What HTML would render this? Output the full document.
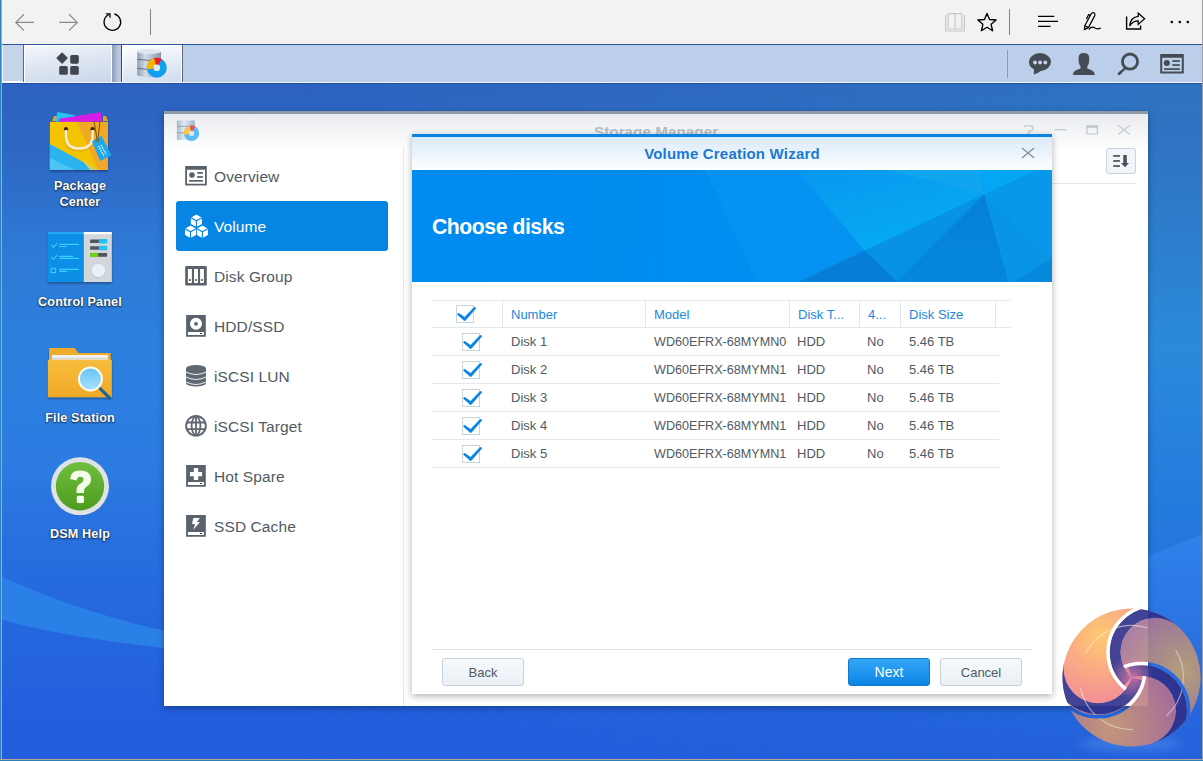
<!DOCTYPE html>
<html><head><meta charset="utf-8">
<style>
*{margin:0;padding:0;box-sizing:border-box}
html,body{width:1203px;height:761px;overflow:hidden}
body{position:relative;font-family:"Liberation Sans",sans-serif;background:#2d63c1}
.abs{position:absolute}
#desk{left:0;top:84px;width:1203px;height:677px;background:linear-gradient(180deg,#2e62c0 0%,#2d66c6 40%,#2a60d6 100%)}
#toolbar{left:0;top:0;width:1203px;height:44px;background:#f2f2f2}
#blueline{left:0;top:44px;width:1203px;height:1px;background:#2b569f}
#taskbar{left:0;top:45px;width:1203px;height:38px;background:#bccfea}
#tbline{left:0;top:83px;width:1203px;height:1px;background:#1f4c9c}
#lb{left:0;top:0;width:2px;height:761px;background:linear-gradient(90deg,#2e80b8 50%,#b8a890 50%)}
#rb{left:1202px;top:0;width:1px;height:761px;background:#a0a0a0}
#bb{left:0;top:759px;width:1203px;height:2px;background:linear-gradient(180deg,#b4a98f 50%,#2f7fb5 50%)}
.dtxt{position:absolute;width:120px;text-align:center;color:#fff;font-weight:bold;font-size:12.6px;letter-spacing:.15px;line-height:16px;text-shadow:0 1px 2px rgba(0,0,0,.7),0 0 1px rgba(0,0,0,.6)}
/* storage manager window */
#sm{left:164px;top:111px;width:984px;height:595px;background:#fff;border-top:3px solid #8f99a5;box-shadow:0 2px 6px rgba(0,0,0,.35)}
#smhead{left:0;top:0;width:984px;height:36px;background:linear-gradient(180deg,#e8ebef,#fff)}
.nav{position:absolute;left:12px;width:212px;height:50px;border-radius:3px;color:#505a64;font-size:15.5px;letter-spacing:.1px}
.nav span{position:absolute;left:38px;top:15.5px;line-height:20px}
.nav svg{position:absolute;left:9px;top:14px}
.nav.sel{background:#0785e2;color:#fff}
/* dialog */
#dlg{left:412px;top:134px;width:640px;height:560px;background:#fff;border-top:3px solid #0a85e3;box-shadow:0 2px 7px rgba(0,0,0,.32)}
#dhead{left:0;top:0;width:640px;height:33px;background:linear-gradient(180deg,#daeaf8,#fdfeff)}
#dtitle{left:0;top:8px;width:640px;text-align:center;color:#1a79d3;font-weight:bold;font-size:15px;letter-spacing:.2px;line-height:18px}
#banner{left:0;top:33px;width:640px;height:112px;background:#058ff0;overflow:hidden}
#choose{left:20px;top:44.5px;color:#fff;font-weight:bold;font-size:21.2px;letter-spacing:-.45px;line-height:24px}
.th,.td{position:absolute;font-size:13px;line-height:16px}
.th{color:#1b88dc;margin-top:1px}
.td{color:#505a64}
.hl{position:absolute;height:1px;background:#e3e8ee}
.vl{position:absolute;width:1px;background:#e3e8ee}
.cb{position:absolute;width:18px;height:18px;border:1px solid #c9d3dd;background:#fff}
.btn{position:absolute;top:521px;width:82px;height:28px;border-radius:3px;font-size:13px;text-align:center;line-height:27px}
.btn.g{border:1px solid #c7d1db;background:linear-gradient(180deg,#f7fafc,#e9eff5);color:#505a64}
.btn.b{border:1px solid #1279d3;background:linear-gradient(180deg,#34a6f7,#0b85e4);color:#fff}
</style></head>
<body>
<div id="desk" class="abs"><svg class="abs" style="left:0;top:0" width="1203" height="677" viewBox="0 84 1203 677">
<defs>
<linearGradient id="dg" x1="0" y1="84" x2="0" y2="761" gradientUnits="userSpaceOnUse"><stop offset="0" stop-color="#2d62c0"/><stop offset=".1" stop-color="#2d68c4"/><stop offset=".25" stop-color="#2e7ad6"/><stop offset=".39" stop-color="#2c80dd"/><stop offset=".55" stop-color="#2c7ce2"/><stop offset=".69" stop-color="#276ede"/><stop offset=".95" stop-color="#225ddd"/></linearGradient>
<linearGradient id="rg" x1="0" y1="84" x2="0" y2="761" gradientUnits="userSpaceOnUse"><stop offset="0" stop-color="#2f72c0"/><stop offset=".1" stop-color="#2e74c2"/><stop offset=".39" stop-color="#2b8adb"/><stop offset=".59" stop-color="#257ddd"/><stop offset="1" stop-color="#2360da"/></linearGradient>
<linearGradient id="rm" x1="300" y1="0" x2="1150" y2="0" gradientUnits="userSpaceOnUse"><stop offset="0" stop-color="#fff" stop-opacity="0"/><stop offset="1" stop-color="#fff" stop-opacity="1"/></linearGradient>
<mask id="rmask"><rect x="0" y="84" width="1203" height="677" fill="url(#rm)"/></mask>
<linearGradient id="rb2" x1="0" y1="535" x2="0" y2="761" gradientUnits="userSpaceOnUse"><stop offset="0" stop-color="#2e82ea"/><stop offset=".55" stop-color="#2a6ee0"/><stop offset="1" stop-color="#2460db"/></linearGradient>
</defs>
<rect x="0" y="84" width="1203" height="677" fill="url(#dg)"/>
<rect x="0" y="84" width="1203" height="677" fill="url(#rg)" mask="url(#rmask)"/>
<path d="M0 576 C 40 594, 100 618, 180 634 L180 650 C 100 641, 40 631, 0 619 Z" fill="#2b80e8"/>
<path d="M1148 556 L1203 534 L1203 761 L1148 761 Z" fill="url(#rb2)"/>
</svg></div>
<div id="toolbar" class="abs"><svg class="abs" style="left:0;top:0" width="1203" height="44" viewBox="0 0 1203 44">
<g fill="none" stroke="#8c8c8c" stroke-width="1.25">
<path d="M15.8 22.4 H34 M24 14.2 L15.8 22.4 L24 30.6"/>
<path d="M59.2 22.4 H77.4 M69 14.2 L77.2 22.4 L69 30.6"/>
</g>
<g fill="none" stroke="#000" stroke-width="1.35">
<path d="M114.4 14.0 A8.3 8.3 0 1 1 108.9 14.5"/>
</g>
<path d="M105.4 13.3 L110.6 13.3 L110.6 18.3 L109.3 17.2 L109.3 14.6 L106.6 14.6 Z" fill="#000"/>
<rect x="150" y="9" width="1" height="26" fill="#848484"/>
<g fill="none" stroke="#c9c9c9" stroke-width="1.2">
<path d="M945.6 15.2 V31 H964.4 V15.2"/>
<path d="M948.2 13.6 H955 V29 H948.2 Z M955 13.6 H961.8 V29 H955 Z"/>
</g>
<path d="M987.00 13.40 L989.53 19.52 L996.13 20.03 L991.09 24.33 L992.64 30.77 L987.00 27.30 L981.36 30.77 L982.91 24.33 L977.87 20.03 L984.47 19.52 Z" fill="none" stroke="#000" stroke-width="1.35" stroke-linejoin="round"/>
<rect x="1009" y="9" width="1" height="26" fill="#848484"/>
<g stroke="#000" stroke-width="1.3">
<path d="M1038 16.3 H1054.3 M1038 21.3 H1058 M1038 26.3 H1050.5"/>
</g>
<g fill="none" stroke="#000" stroke-width="1.2" stroke-linejoin="round">
<path d="M1084.4 29.6 L1084.8 25.8 L1091.2 13.8 Q1092.6 11.9 1094.2 12.9 Q1095.4 14 1094.8 15.6 L1088.4 27.6 Z"/><path d="M1090.4 15.4 L1088.6 14.6 L1086.4 19.2"/><path d="M1084.8 25.8 L1088.4 27.6"/><path d="M1088.9 29.4 Q1091.6 26.2 1094.4 27.6 Q1097 29.9 1100.8 28"/>
</g>
<g fill="none" stroke="#000" stroke-width="1.4">
<path d="M1126.6 16.6 V29 H1140.6 V25.6"/>

</g>
<path d="M1129.6 26 Q1130.6 17.2 1138.2 16.4 L1138.2 13.2 L1144.6 18.8 L1138.2 24.4 L1138.2 20.8 Q1132.6 20.8 1129.6 26 Z" fill="none" stroke="#000" stroke-width="1.25" stroke-linejoin="miter"/>
<circle cx="1171.8" cy="22" r="1.3" fill="#000"/><circle cx="1179.8" cy="22" r="1.3" fill="#000"/><circle cx="1187.8" cy="22" r="1.3" fill="#000"/>
</svg></div>
<div id="blueline" class="abs"></div>
<div id="taskbar" class="abs"><div class="abs" style="left:2px;top:0;width:21px;height:37px;background:#c6d4ea;border-left:1px solid #e9eef7;border-bottom:1px solid #fff"></div>
<div class="abs" style="left:23px;top:0;width:1px;height:37px;background:#5f6678"></div>
<div class="abs" style="left:24px;top:0;width:88px;height:37px;border:1px solid #fff;border-bottom:none;background:linear-gradient(170deg,#f5f8fc 0%,#dfe6f2 45%,#c9d6ec 100%)"></div>
<div class="abs" style="left:112px;top:0;width:9px;height:37px;background:linear-gradient(90deg,#8f9bb4,#b3c1dc 60%,#bccbe6)"></div>
<div class="abs" style="left:121px;top:0;width:1px;height:37px;background:#3d4454"></div>
<div class="abs" style="left:122px;top:0;width:60px;height:37px;border:1px solid #fff;border-bottom:none;background:linear-gradient(170deg,#fdfeff 0%,#e6ecf6 50%,#d0dcef 100%)"></div>
<div class="abs" style="left:182px;top:0;width:1px;height:37px;background:#5f6678"></div>
<div class="abs" style="left:0;top:37px;width:1203px;height:1px;background:#f4f7fb"></div>
<svg class="abs" style="left:0;top:0" width="1203" height="38" viewBox="0 45 1203 38">
<g fill="#41464d">
<path d="M62.1 52.2 L68 58.1 L62.1 64 L56.2 58.1 Z"/>
<rect x="70.2" y="55" width="8.6" height="8.7" rx="1.6"/>
<rect x="59.2" y="66" width="8.6" height="8.8" rx="1.6"/>
<rect x="70.2" y="66" width="8.6" height="8.8" rx="1.6"/>
</g>
<defs><linearGradient id="cyl" x1="0" x2="1"><stop offset="0" stop-color="#8fa0b2"/><stop offset=".35" stop-color="#d5dde6"/><stop offset="1" stop-color="#8797a8"/></linearGradient></defs>
<path d="M137.2 51.5 Q149 47.5 161 51.5 V75.5 Q149 79.5 137.2 75.5 Z" fill="url(#cyl)"/>
<ellipse cx="149.1" cy="51.5" rx="11.9" ry="2.6" fill="#dfe6ee"/>
<path d="M137.2 59.3 Q149 61.5 161 59.3 M137.2 68.4 Q149 70.6 161 68.4" stroke="#5b6470" stroke-width="0.9" fill="none"/>
<circle cx="156.8" cy="67.7" r="6.6" fill="none" stroke="#10a0f0" stroke-width="6.8"/>
<path d="M156.8 67.7 L147 69.5 A10 10 0 0 1 154.2 58 Z" fill="#f7b500"/>
<path d="M156.8 67.7 L154.2 58 A10 10 0 0 1 161.8 59 Z" fill="#ee1c24"/>
<circle cx="156.8" cy="67.7" r="3.3" fill="#e1e8f0"/>
<rect x="1007" y="50" width="1" height="28" fill="#8d9bb0"/>
<g fill="#454b54">
<ellipse cx="1040" cy="62" rx="11" ry="9"/>
<path d="M1034 68 L1033.8 74.6 Q1038 73.5 1042 70 Z"/>
<path d="M1083.8 53 Q1078.5 53 1078.6 58 Q1078.4 64 1080.4 66.2 L1080.6 68.6 Q1073.6 70 1072.9 74.5 L1072.9 75 H1094.8 V74.5 Q1094 70 1087.2 68.6 L1087.4 66.2 Q1089.4 64 1089.2 58 Q1089.2 53 1083.8 53 Z"/>
<circle cx="1130" cy="61.6" r="7.6" fill="none" stroke="#454b54" stroke-width="2.8"/>
<path d="M1124.8 67.2 L1126.3 68.6 L1120.2 74.8 Q1119 75.6 1118.2 74.7 Q1117.3 73.8 1118 72.7 Z"/>
<path d="M1160.2 54 H1183.8 V73.6 H1160.2 Z M1162.2 57.8 V71.6 H1181.8 V57.8 Z" fill-rule="evenodd"/>
<circle cx="1166.8" cy="63" r="3"/>
<rect x="1172.4" y="60.2" width="7.4" height="1.7"/>
<rect x="1172.4" y="64.2" width="7.4" height="1.7"/>
<rect x="1164" y="68.2" width="15.8" height="1.7"/>
</g>
<g fill="#c4d5ec"><circle cx="1035" cy="62.5" r="1.9"/><circle cx="1040.1" cy="62.5" r="1.9"/><circle cx="1045.3" cy="62.5" r="1.9"/></g>
</svg></div>
<div id="tbline" class="abs"></div>

<!-- desktop icons text -->
<svg class="abs" style="left:0;top:0" width="130" height="560" viewBox="0 0 130 560">
<defs>
<linearGradient id="fold" x1="0" y1="0" x2="0" y2="1"><stop offset="0" stop-color="#f8bd3c"/><stop offset="1" stop-color="#f0a928"/></linearGradient>
<linearGradient id="mag" x1="0" y1="0" x2="0" y2="1"><stop offset="0" stop-color="#66c3f4"/><stop offset="1" stop-color="#a9e2fb"/></linearGradient>
<linearGradient id="grn" x1="0" y1="0" x2="0" y2="1"><stop offset="0" stop-color="#70be3e"/><stop offset="1" stop-color="#4d9c1f"/></linearGradient>
<filter id="sh" x="-20%" y="-20%" width="140%" height="150%"><feDropShadow dx="0" dy="1.5" stdDeviation="1.2" flood-color="#000" flood-opacity=".35"/></filter>
</defs>
<!-- package center -->
<g filter="url(#sh)">
<path d="M52 121 L54 116 L57 116 L57 121 Z M103 121 L103 116 L106 116 L108 121 Z" fill="#e8a020"/>
<path d="M57.4 112 L75 115.2 L73.5 123 L55.6 121.4 Z" fill="#22c5f2"/>
<path d="M59 118.8 L100.6 112.3 L102.4 121.5 L59 122 Z" fill="#d61ee6"/>
<rect x="49.9" y="121.9" width="58.1" height="48.1" fill="#f4c400"/>
<path d="M77 121.9 L108 121.9 L108 170 L98 170 Z" fill="#f0a828"/>
<path d="M49.9 144 L98 170 L49.9 170 Z" fill="#2cb3ef"/>
<path d="M49.9 158 L75 170 L49.9 170 Z" fill="#58c9f5" opacity=".8"/>
<path d="M82 160 L98 170 L90 170 Z" fill="#f6d44a" opacity=".8"/>
</g>
<circle cx="66" cy="129.2" r="2.1" fill="#3a2a10"/><circle cx="92.6" cy="129.2" r="2.1" fill="#3a2a10"/>
<path d="M66 130 V136 Q66 148.5 79.3 148.5 Q92.6 148.5 92.6 136 V130" fill="none" stroke="#d9a000" stroke-width="3.4" opacity=".5" transform="translate(0,1.5)"/>
<path d="M66 130 V136 Q66 148.5 79.3 148.5 Q92.6 148.5 92.6 136 V130" fill="none" stroke="#f6eedd" stroke-width="2.6"/>
<path d="M94 121 L97 139 M100 121 L98 139" stroke="#5a4010" stroke-width="0.8" fill="none"/>
<path d="M92 141.5 L101.5 135.8 L111.5 155.3 L100.2 160.9 Z" fill="#1ea8ee"/>
<circle cx="97.6" cy="140" r="1.6" fill="none" stroke="#7a5a10" stroke-width="1"/>
<path d="M98.5 146 L104 156 M101 145 L106 154" stroke="#fff" stroke-width="1.3" stroke-dasharray="1.4 1"/>
<!-- control panel -->
<g filter="url(#sh)">
<rect x="47.9" y="232" width="36" height="50" fill="#0d8fe7"/>
<rect x="47.9" y="232" width="36" height="2.2" fill="#23aaf6"/>
<rect x="83.8" y="232" width="28" height="50" fill="#d4d7da"/>
<rect x="83.8" y="232" width="28" height="2.2" fill="#fbfbfb"/>
</g>
<g stroke="#38d0ff" stroke-width="1.1" fill="none">
<path d="M51.3 245 L53.5 247.2 L57.2 243"/><path d="M51.3 257 L53.5 259.3 L57.2 255"/>
<rect x="51.2" y="268.3" width="4.4" height="4.3"/>
<path d="M59.4 244.4 H78.7 M59.4 246.5 H66.9 M59.4 256.4 H73 M59.4 258.4 H78.7 M59.4 269.4 H78.7 M59.4 271.4 H67"/>
</g>
<rect x="90.1" y="239.4" width="17" height="3.6" rx=".6" fill="#52575e"/><rect x="98.8" y="239" width="8.3" height="4.4" rx=".8" fill="#1ec3f5"/>
<rect x="90.1" y="246.2" width="17" height="3.6" rx=".6" fill="#52575e"/><rect x="98.8" y="245.8" width="8.3" height="4.4" rx=".8" fill="#1ec3f5"/>
<rect x="90.1" y="253.1" width="17" height="3.6" rx=".6" fill="#52575e"/><rect x="90.1" y="252.7" width="8" height="4.4" rx=".8" fill="#6fd315"/>
<circle cx="98.4" cy="271.2" r="6.8" fill="#9aa0a6" opacity=".5"/>
<circle cx="98.4" cy="270.6" r="6.7" fill="#e9f1f8"/>
<!-- file station -->
<g filter="url(#sh)">
<path d="M49.1 349 Q49.1 347.9 50.2 347.9 L74.4 347.9 L78.7 353 L109.6 353 Q110.6 353 110.6 354 L110.6 362 L49.1 362 Z" fill="#eeac2c"/>
<rect x="51.9" y="355" width="56" height="5" fill="#f2f2f2"/>
<rect x="51.9" y="357.6" width="56" height="2" fill="#d8d8d8"/>
<path d="M47.9 360.6 Q47.9 359.7 48.8 359.7 L110.9 359.7 Q111.8 359.7 111.8 360.6 L111.8 397.2 L47.9 397.2 Z" fill="url(#fold)"/>
</g>
<path d="M100.2 388.7 L109.6 398" stroke="#1d6797" stroke-width="3.2" stroke-linecap="round"/>
<circle cx="90.4" cy="379" r="11.5" fill="url(#mag)" stroke="#fffdf5" stroke-width="1.9"/>
<!-- dsm help -->
<circle cx="80" cy="487" r="29" fill="#1f4aa0" opacity=".25"/>
<circle cx="80" cy="486.2" r="29" fill="#dfe3e7"/>
<circle cx="80" cy="486.2" r="24.2" fill="url(#grn)"/>
<path d="M70.2 479 Q70.2 470.5 80.2 470.5 Q91 470.5 91 479.5 Q91 484.5 86 487 Q84 488.2 84 491.5 L84 493 L76.5 493 L76.5 490.5 Q76.5 485.5 80.5 483.5 Q83.5 482 83.5 479.5 Q83.5 476.8 80.2 476.8 Q77 476.8 76.8 480.5 Z" fill="#f3fbe9"/>
<rect x="76.8" y="495.8" width="7.2" height="7.2" rx="1.5" fill="#f3fbe9"/>
</svg>
<div class="dtxt" style="left:20px;top:178px">Package<br>Center</div>
<div class="dtxt" style="left:20px;top:294px">Control Panel</div>
<div class="dtxt" style="left:20px;top:410px">File Station</div>
<div class="dtxt" style="left:20px;top:526px">DSM Help</div>

<div id="sm" class="abs">
  <div id="smhead" class="abs"></div>
  <div class="abs" style="left:239px;top:33px;width:1px;height:559px;background:#e6e9ec"></div>
  <div class="nav" style="top:37px"><span>Overview</span></div>
  <div class="nav sel" style="top:87px"><span>Volume</span></div>
  <div class="nav" style="top:137px"><span>Disk Group</span></div>
  <div class="nav" style="top:187px"><span>HDD/SSD</span></div>
  <div class="nav" style="top:237px"><span>iSCSI LUN</span></div>
  <div class="nav" style="top:287px"><span>iSCSI Target</span></div>
  <div class="nav" style="top:337px"><span>Hot Spare</span></div>
  <div class="nav" style="top:387px"><span>SSD Cache</span></div>
</div>

<svg class="abs" style="left:0;top:0" width="420" height="560" viewBox="0 0 420 560">
<g fill="#5a626c">
<path d="M185.2 165.9 H206.8 V185.6 H185.2 Z M187 169.7 V183.8 H205 V169.7 Z" fill-rule="evenodd"/>
<circle cx="192" cy="175" r="2.8"/>
<rect x="197.2" y="172" width="5.7" height="1.8"/><rect x="197.2" y="176.1" width="5.7" height="1.8"/><rect x="189.1" y="180" width="13.8" height="1.7"/>
</g>
<g><polygon points="196.4,214.6 201.9,217.7 201.9,223.9 196.4,227.0 190.9,223.9 190.9,217.7" fill="#fff"/><path d="M190.9 217.7 L196.4 220.79999999999998 L201.9 217.7 M196.4 220.79999999999998 V227.0" stroke="#0785e2" stroke-width="1.1" fill="none"/><polygon points="190.5,225.6 196.0,228.7 196.0,234.9 190.5,238.0 185.0,234.9 185.0,228.7" fill="#fff"/><path d="M185.0 228.7 L190.5 231.79999999999998 L196.0 228.7 M190.5 231.79999999999998 V238.0" stroke="#0785e2" stroke-width="1.1" fill="none"/><polygon points="202.4,225.6 207.9,228.7 207.9,234.9 202.4,238.0 196.9,234.9 196.9,228.7" fill="#fff"/><path d="M196.9 228.7 L202.4 231.79999999999998 L207.9 228.7 M202.4 231.79999999999998 V238.0" stroke="#0785e2" stroke-width="1.1" fill="none"/></g>
<g fill="#5a626c">
<path d="M186.2 266 H205.8 Q206.8 266 206.8 267 V284.6 Q206.8 285.6 205.8 285.6 H186.2 Q185.2 285.6 185.2 284.6 V267 Q185.2 266 186.2 266 Z M187.9 268.9 V282.9 H191.9 V268.9 Z M194 268.9 V282.9 H198 V268.9 Z M200.1 268.9 V282.9 H203.9 V268.9 Z" fill-rule="evenodd"/>
<rect x="189.1" y="279.2" width="1.6" height="1.6" fill="#333"/><rect x="195.2" y="279.2" width="1.6" height="1.6" fill="#333"/><rect x="201.2" y="279.2" width="1.6" height="1.6" fill="#333"/>
<path d="M186.1 315 H205.8 V336.8 H186.1 Z M202 323.8 A6 6 0 1 0 190 323.8 A6 6 0 1 0 202 323.8 Z M187.9 331.9 V334.9 H203.9 V331.9 Z" fill-rule="evenodd"/>
<circle cx="196" cy="323.8" r="1.9"/><rect x="200" y="332.9" width="2.2" height="1.1" rx=".5" fill="#333"/>
</g>
<g fill="#5f6770">
<ellipse cx="196" cy="383" rx="10" ry="3.6"/><rect x="186" y="378.6" width="20" height="4.4"/>
<ellipse cx="196" cy="378" rx="10" ry="3.4"/><rect x="186" y="373.6" width="20" height="4.4"/>
<ellipse cx="196" cy="373" rx="10" ry="3.4"/><rect x="186" y="368.6" width="20" height="4.4"/>
<ellipse cx="196" cy="368.5" rx="10" ry="3.4"/>
</g>
<g fill="none" stroke="#fff" stroke-width="0.9">
<path d="M186 372 Q196 377 206 372"/><path d="M186 377 Q196 382 206 377"/><path d="M186 382 Q196 387 206 382"/>
</g>
<g>
<circle cx="196" cy="425.8" r="10.8" fill="#5f6770"/>
<circle cx="196" cy="425.8" r="8.9" fill="#fff"/>
<g stroke="#5f6770" stroke-width="1.8" fill="none">
<path d="M186 422.5 H206 M186 429.1 H206 M196 416 V436"/>
<ellipse cx="196" cy="425.8" rx="4.4" ry="9.2"/>
</g>
</g>
<g fill="#5a626c">
<path d="M186.1 465 H205.8 V486.8 H186.1 Z M193.8 467.9 V471.9 H189.9 V476.2 H193.8 V480 H198.2 V476.2 H202.1 V471.9 H198.2 V467.9 Z M187.9 481.9 V484.9 H203.9 V481.9 Z" fill-rule="evenodd"/>
<rect x="200" y="482.9" width="2.2" height="1.1" rx=".5" fill="#333"/>
<path d="M186.1 515 H205.8 V536.8 H186.1 Z M193.4 518.1 L199.9 518.1 L196.8 521.9 L199.9 522.2 L193.2 529.8 L195 524.6 L192 523.8 Z M187.9 531.9 V534.9 H203.9 V531.9 Z" fill-rule="evenodd"/>
<rect x="200" y="532.9" width="2.2" height="1.1" rx=".5" fill="#333"/>
</g>
</svg>
<svg class="abs" style="left:0;top:0" width="1203" height="200" viewBox="0 0 1203 200">
<defs><linearGradient id="cyl2" x1="0" x2="1"><stop offset="0" stop-color="#a9bccf"/><stop offset=".4" stop-color="#e0e9f2"/><stop offset="1" stop-color="#9fb2c6"/></linearGradient></defs>
<rect x="176.9" y="120.5" width="17.9" height="19.4" fill="url(#cyl2)"/>
<path d="M176.9 126.3 H194.8 M176.9 132.8 H194.8" stroke="#8b96a2" stroke-width=".8"/>
<circle cx="191.5" cy="133.3" r="5.2" fill="none" stroke="#5cbdf6" stroke-width="5"/>
<path d="M191.5 133.3 L184 135 A7.7 7.7 0 0 1 189.6 125.8 Z" fill="#f9c83c"/>
<path d="M191.5 133.3 L189.6 125.8 A7.7 7.7 0 0 1 195.3 126.6 Z" fill="#f0505e"/>
<circle cx="191.5" cy="133.3" r="2.6" fill="#dde8f0"/>
<text x="594" y="136.8" font-family="Liberation Sans" font-weight="bold" font-size="15.3" fill="#b9bdc3">Storage Manager</text>
<g stroke="#c8ccd1" stroke-width="1.4" fill="none">
<path d="M1024 126.5 Q1027 125.3 1030.5 125.8 Q1033.5 126.6 1033.2 128.8 Q1032.8 130.8 1028.5 131.3 V134"/>
<path d="M1054.5 129.7 H1066"/>
<path d="M1086.9 125.8 H1097.4 V133.9 H1086.9 Z"/>
<path d="M1118.4 125.5 L1129.8 134.2 M1129.8 125.5 L1118.4 134.2"/>
</g>
<rect x="1086.2" y="125" width="11.9" height="3" fill="#c8ccd1"/>
<rect x="1106.5" y="148.5" width="29" height="25" rx="2.5" fill="#f1f5f9" stroke="#c9d3dd" stroke-width="1"/>
<g fill="#4a5058">
<rect x="1113.2" y="155.1" width="6.7" height="1.7"/><rect x="1113.2" y="160.1" width="6.7" height="1.7"/><rect x="1113.2" y="165.2" width="6.7" height="1.7"/>
<path d="M1123.3 154.9 H1126.8 V163.1 H1129 L1125 167.2 L1121 163.1 H1123.3 Z"/>
</g>
<rect x="1052" y="183" width="84" height="1" fill="#dfe5ea"/>
</svg>
<div id="dlg" class="abs">
  <div id="dhead" class="abs"><div id="dtitle" class="abs">Volume Creation Wizard</div><svg class="abs" style="left:608px;top:9px" width="16" height="14" viewBox="0 0 16 14"><path d="M2 2 L14.2 12 M14.2 2 L2 12" stroke="#8c9299" stroke-width="1.5"/></svg></div>
  <div id="banner" class="abs"><svg class="abs" style="left:0;top:0" width="640" height="112" viewBox="0 0 640 112"><defs><linearGradient id="g1" x1="0" y1="0" x2="0.6" y2="1"><stop offset="0" stop-color="#0897ef"/><stop offset="1" stop-color="#05acf3"/></linearGradient><linearGradient id="g2" x1="0" y1="0" x2="0" y2="1"><stop offset="0" stop-color="#0580d6"/><stop offset="1" stop-color="#0587de"/></linearGradient><linearGradient id="g0" x1="0" y1="0" x2="1" y2="0"><stop offset="0" stop-color="#008bf0"/><stop offset="1" stop-color="#0290ef"/></linearGradient></defs><rect width="640" height="112" fill="url(#g0)"/><polygon points="293.0,0.0 385.0,0.0 452.5,80.8 387.5,111.6 345.0,111.6" fill="#0692f1"/><polygon points="385.0,0.0 475.8,0.0 572.3,24.4 452.5,80.8" fill="url(#g1)"/><polygon points="475.8,0.0 567.6,0.0 572.3,24.4" fill="#12a5ef"/><polygon points="567.6,0.0 625.0,0.0 572.3,24.4" fill="#04a7f4"/><polygon points="625.0,0.0 640.0,0.0 640.0,88.6 572.3,24.4" fill="#0898e9"/><polygon points="452.5,80.8 572.3,24.4 485.0,111.6" fill="#0892e5"/><polygon points="572.3,24.4 485.0,111.6 596.3,111.6" fill="url(#g2)"/><polygon points="572.3,24.4 596.3,111.6 602.0,111.6 640.0,88.6" fill="#0895e6"/><polygon points="602.0,111.6 640.0,111.6 640.0,88.6" fill="#0688dc"/><polygon points="387.5,111.6 452.5,80.8 485.0,111.6" fill="#067ed7"/></svg><div id="choose" class="abs">Choose disks</div></div>

  <div class="hl" style="left:20px;top:163px;width:579px"></div>
  <div class="hl" style="left:20px;top:190px;width:579px"></div>
  <div class="vl" style="left:90px;top:164px;height:26px"></div>
  <div class="vl" style="left:233px;top:164px;height:26px"></div>
  <div class="vl" style="left:377px;top:164px;height:26px"></div>
  <div class="vl" style="left:447px;top:164px;height:26px"></div>
  <div class="vl" style="left:488px;top:164px;height:26px"></div>
  <div class="vl" style="left:583px;top:164px;height:26px"></div>
  <div class="cb" style="left:44px;top:168px"><svg class="abs" width="22" height="18" viewBox="0 0 22 18" style="left:-1px;top:-1px;overflow:visible"><path d="M1.3 9.8 Q1.1 8.0 2.8 8.0 L8.6 12.0 L17.6 2.4 Q19.5 1.4 20.0 3.4 L9.6 15.4 Q8.7 16.3 7.8 15.5 Z" fill="#0b86e6"/></svg></div>
  <div class="th" style="left:99px;top:169px">Number</div>
  <div class="th" style="left:242px;top:169px">Model</div>
  <div class="th" style="left:386px;top:169px">Disk T...</div>
  <div class="th" style="left:456px;top:169px">4...</div>
  <div class="th" style="left:497px;top:169px">Disk Size</div>
<div class="cb" style="left:50px;top:196px"><svg class="abs" width="22" height="18" viewBox="0 0 22 18" style="left:-1px;top:-1px;overflow:visible"><path d="M1.3 9.8 Q1.1 8.0 2.8 8.0 L8.6 12.0 L17.6 2.4 Q19.5 1.4 20.0 3.4 L9.6 15.4 Q8.7 16.3 7.8 15.5 Z" fill="#0b86e6"/></svg></div>
<div class="td" style="left:99px;top:197px">Disk 1</div><div class="td" style="font-size:12.6px;left:242px;top:197px">WD60EFRX-68MYMN0</div><div class="td" style="left:385px;top:197px">HDD</div><div class="td" style="left:455px;top:197px">No</div><div class="td" style="left:497px;top:197px">5.46 TB</div>
<div class="hl" style="left:20px;top:218px;width:567px"></div>
<div class="cb" style="left:50px;top:224px"><svg class="abs" width="22" height="18" viewBox="0 0 22 18" style="left:-1px;top:-1px;overflow:visible"><path d="M1.3 9.8 Q1.1 8.0 2.8 8.0 L8.6 12.0 L17.6 2.4 Q19.5 1.4 20.0 3.4 L9.6 15.4 Q8.7 16.3 7.8 15.5 Z" fill="#0b86e6"/></svg></div>
<div class="td" style="left:99px;top:225px">Disk 2</div><div class="td" style="font-size:12.6px;left:242px;top:225px">WD60EFRX-68MYMN1</div><div class="td" style="left:385px;top:225px">HDD</div><div class="td" style="left:455px;top:225px">No</div><div class="td" style="left:497px;top:225px">5.46 TB</div>
<div class="hl" style="left:20px;top:246px;width:567px"></div>
<div class="cb" style="left:50px;top:252px"><svg class="abs" width="22" height="18" viewBox="0 0 22 18" style="left:-1px;top:-1px;overflow:visible"><path d="M1.3 9.8 Q1.1 8.0 2.8 8.0 L8.6 12.0 L17.6 2.4 Q19.5 1.4 20.0 3.4 L9.6 15.4 Q8.7 16.3 7.8 15.5 Z" fill="#0b86e6"/></svg></div>
<div class="td" style="left:99px;top:253px">Disk 3</div><div class="td" style="font-size:12.6px;left:242px;top:253px">WD60EFRX-68MYMN1</div><div class="td" style="left:385px;top:253px">HDD</div><div class="td" style="left:455px;top:253px">No</div><div class="td" style="left:497px;top:253px">5.46 TB</div>
<div class="hl" style="left:20px;top:274px;width:567px"></div>
<div class="cb" style="left:50px;top:280px"><svg class="abs" width="22" height="18" viewBox="0 0 22 18" style="left:-1px;top:-1px;overflow:visible"><path d="M1.3 9.8 Q1.1 8.0 2.8 8.0 L8.6 12.0 L17.6 2.4 Q19.5 1.4 20.0 3.4 L9.6 15.4 Q8.7 16.3 7.8 15.5 Z" fill="#0b86e6"/></svg></div>
<div class="td" style="left:99px;top:281px">Disk 4</div><div class="td" style="font-size:12.6px;left:242px;top:281px">WD60EFRX-68MYMN1</div><div class="td" style="left:385px;top:281px">HDD</div><div class="td" style="left:455px;top:281px">No</div><div class="td" style="left:497px;top:281px">5.46 TB</div>
<div class="hl" style="left:20px;top:302px;width:567px"></div>
<div class="cb" style="left:50px;top:308px"><svg class="abs" width="22" height="18" viewBox="0 0 22 18" style="left:-1px;top:-1px;overflow:visible"><path d="M1.3 9.8 Q1.1 8.0 2.8 8.0 L8.6 12.0 L17.6 2.4 Q19.5 1.4 20.0 3.4 L9.6 15.4 Q8.7 16.3 7.8 15.5 Z" fill="#0b86e6"/></svg></div>
<div class="td" style="left:99px;top:309px">Disk 5</div><div class="td" style="font-size:12.6px;left:242px;top:309px">WD60EFRX-68MYMN1</div><div class="td" style="left:385px;top:309px">HDD</div><div class="td" style="left:455px;top:309px">No</div><div class="td" style="left:497px;top:309px">5.46 TB</div>
<div class="hl" style="left:20px;top:330px;width:567px"></div>

  <div class="hl" style="left:20px;top:512px;width:600px;background:#dfe3e8"></div>
  <div class="btn g" style="left:30px">Back</div>
  <div class="btn b" style="left:436px;font-size:14px">Next</div>
  <div class="btn g" style="left:528px">Cancel</div>
</div>

<!--LOGO--><svg class="abs" style="left:0;top:0" width="1203" height="761" viewBox="0 0 1203 761"><defs>
<radialGradient id="kg0" cx="1100.4" cy="636.2" r="75.9" gradientUnits="userSpaceOnUse"><stop offset="0" stop-color="#ffc462"/><stop offset="1" stop-color="#f27a92"/></radialGradient>
<clipPath id="kc0"><path d="M1064.3 662.0 A69 69 0 0 1 1178.6 627.0 A34.5 34.5 0 0 0 1131.5 677.5 A34.5 34.5 0 0 1 1064.3 662.0 Z"/></clipPath>
<radialGradient id="kg1" cx="1182.9" cy="671.2" r="75.9" gradientUnits="userSpaceOnUse"><stop offset="0" stop-color="#c2a470"/><stop offset="1" stop-color="#a06a9e"/></radialGradient>
<clipPath id="kc1"><path d="M1178.6 627.0 A69 69 0 0 1 1151.7 743.5 A34.5 34.5 0 0 0 1131.5 677.5 A34.5 34.5 0 0 1 1178.6 627.0 Z"/></clipPath>
<radialGradient id="kg2" cx="1111.3" cy="725.1" r="75.9" gradientUnits="userSpaceOnUse"><stop offset="0" stop-color="#d49e6e"/><stop offset="1" stop-color="#ae6898"/></radialGradient>
<clipPath id="kc2"><path d="M1151.7 743.5 A69 69 0 0 1 1064.3 662.0 A34.5 34.5 0 0 0 1131.5 677.5 A34.5 34.5 0 0 1 1151.7 743.5 Z"/></clipPath>
<radialGradient id="kctr" cx="1131.5" cy="677.5" r="22" gradientUnits="userSpaceOnUse"><stop offset="0" stop-color="#ff7a9c" stop-opacity="1"/><stop offset="1" stop-color="#ff7a9c" stop-opacity="0"/></radialGradient>
<filter id="kblur" x="-50%" y="-50%" width="200%" height="200%"><feGaussianBlur stdDeviation="4"/></filter>
<mask id="kgap" maskUnits="userSpaceOnUse" x="1040" y="590" width="163" height="171"><rect x="1040" y="590" width="163" height="171" fill="#fff"/>
<g clip-path="url(#kc0)"><circle cx="1155.0" cy="652.3" r="47.0" fill="none" stroke="#000" stroke-width="3.5" /></g>
<g clip-path="url(#kc1)"><circle cx="1141.6" cy="710.5" r="47.0" fill="none" stroke="#000" stroke-width="3.5" /></g>
<g clip-path="url(#kc2)"><circle cx="1097.9" cy="669.7" r="47.0" fill="none" stroke="#000" stroke-width="3.5" /></g>
</mask>
</defs>
<ellipse cx="1131" cy="744" rx="52" ry="7" fill="#6aa4f4" opacity=".35" filter="url(#kblur)"/>
<g opacity="0.9" mask="url(#kgap)">
<path d="M1064.3 662.0 A69 69 0 0 1 1178.6 627.0 A34.5 34.5 0 0 0 1131.5 677.5 A34.5 34.5 0 0 1 1064.3 662.0 Z" fill="url(#kg0)"/>
<path d="M1178.6 627.0 A69 69 0 0 1 1151.7 743.5 A34.5 34.5 0 0 0 1131.5 677.5 A34.5 34.5 0 0 1 1178.6 627.0 Z" fill="url(#kg1)"/>
<path d="M1151.7 743.5 A69 69 0 0 1 1064.3 662.0 A34.5 34.5 0 0 0 1131.5 677.5 A34.5 34.5 0 0 1 1151.7 743.5 Z" fill="url(#kg2)"/>
<g clip-path="url(#kc0)"><path d="M1178.6 627.0 A34.5 34.5 0 0 0 1131.5 677.5" stroke="#2e2f8a" stroke-width="22" fill="none"/></g>
<g clip-path="url(#kc1)"><path d="M1151.7 743.5 A34.5 34.5 0 0 0 1131.5 677.5" stroke="#2e2f8a" stroke-width="22" fill="none"/></g>
<g clip-path="url(#kc2)"><path d="M1064.3 662.0 A34.5 34.5 0 0 0 1131.5 677.5" stroke="#2e2f8a" stroke-width="22" fill="none"/></g>
<path d="M1085.6 653.1 A52 52 0 0 1 1147.6 628.0" stroke="#fff6e0" stroke-width="1.2" fill="none" opacity="0.55"/>
<path d="M1175.6 649.9 A52 52 0 0 1 1166.3 716.1" stroke="#fff6e0" stroke-width="1.2" fill="none" opacity="0.55"/>
<path d="M1133.3 729.5 A52 52 0 0 1 1080.6 688.3" stroke="#fff6e0" stroke-width="1.2" fill="none" opacity="0.55"/>
<circle cx="1131.5" cy="677.5" r="22" fill="url(#kctr)" opacity=".7"/>
</g></svg><!--/LOGO-->
<div id="lb" class="abs"></div>
<div id="rb" class="abs"></div>
<div id="bb" class="abs"></div>
</body></html>
